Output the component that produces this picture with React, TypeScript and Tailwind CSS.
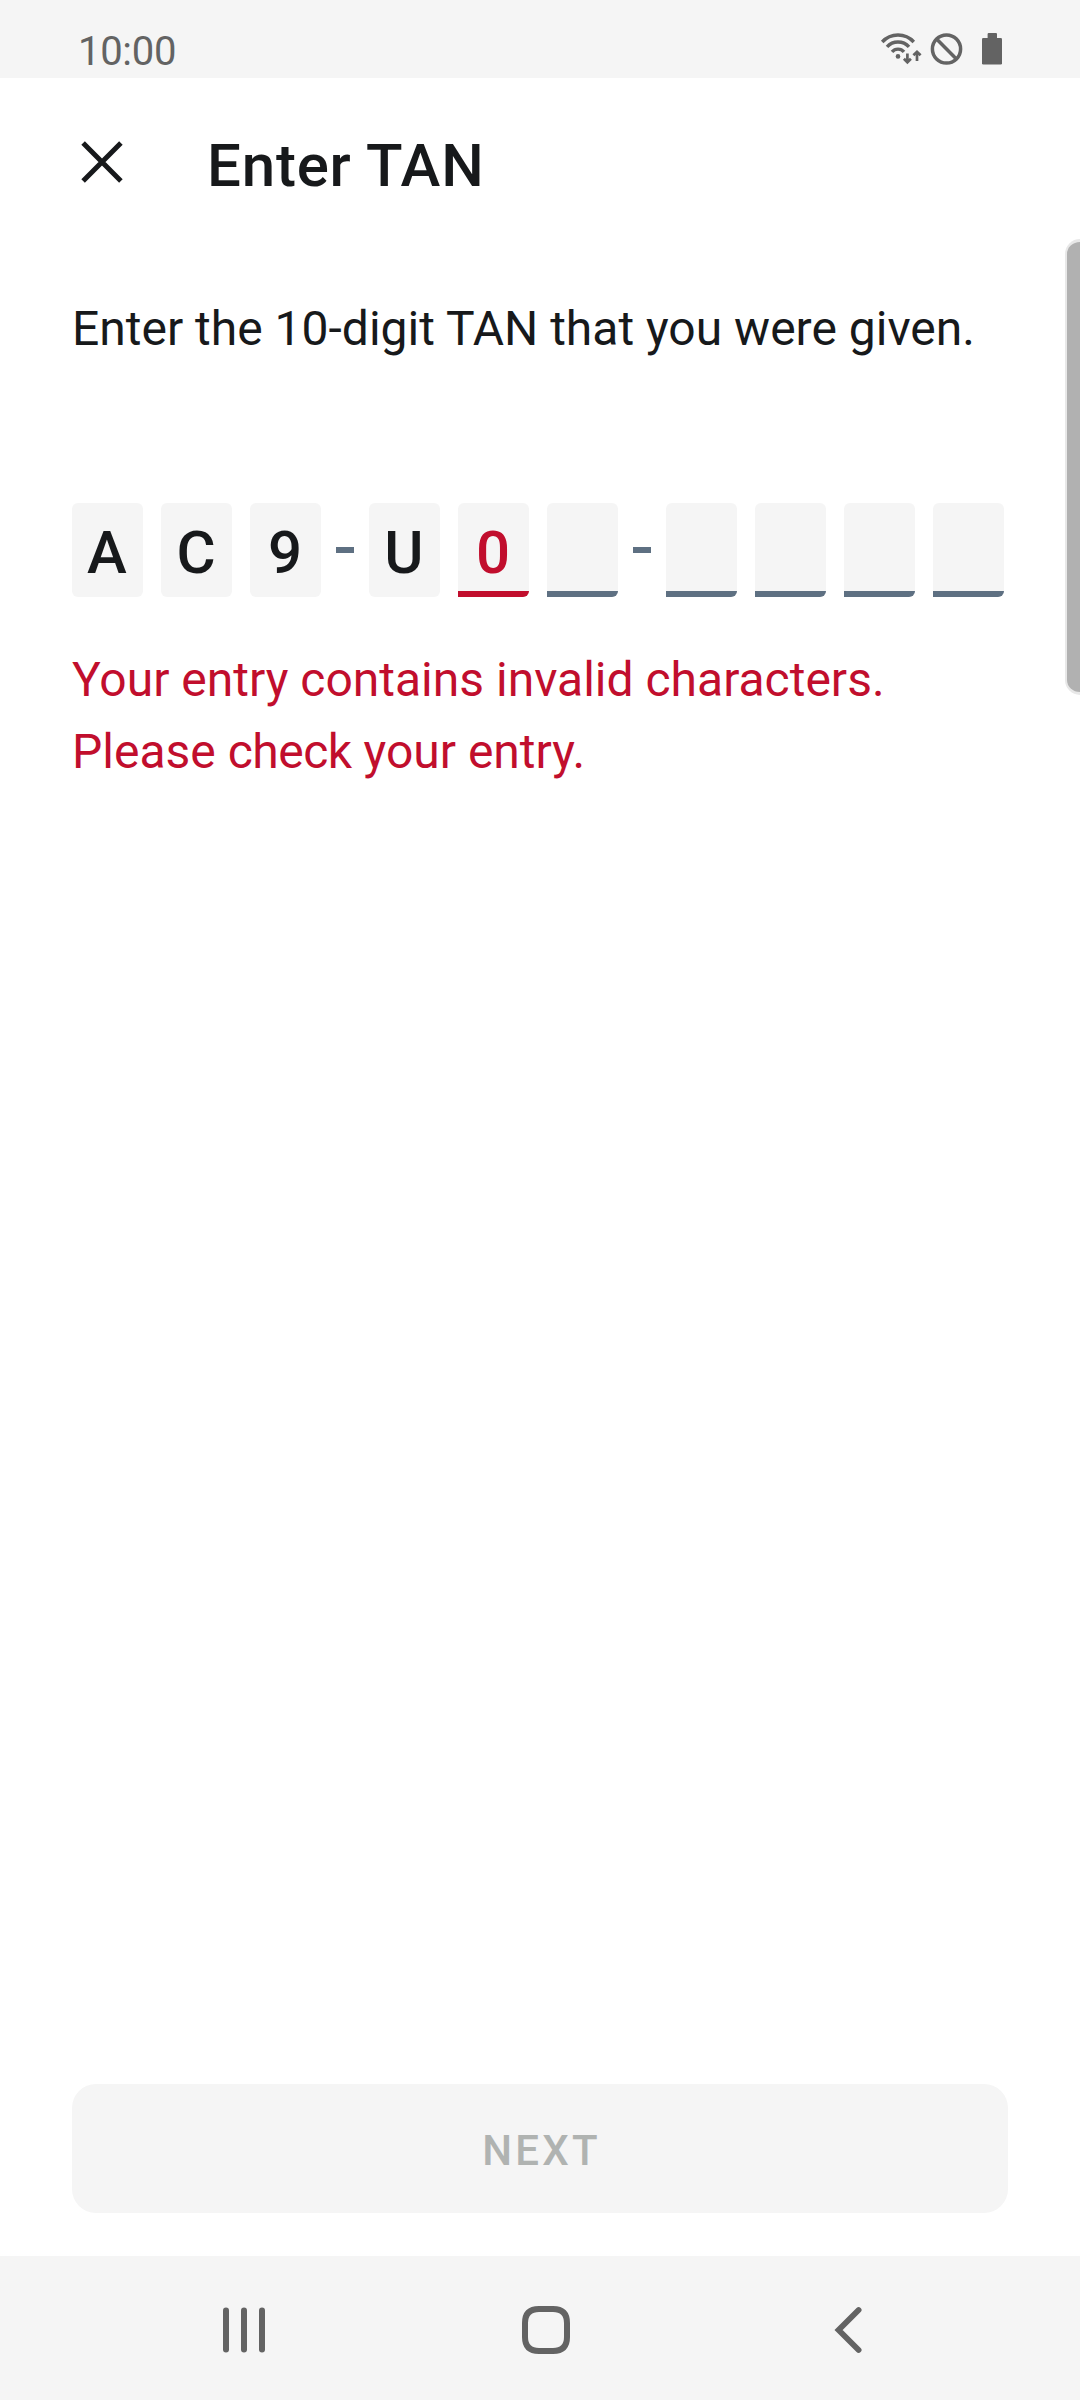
type CellState = 'filled' | 'invalid' | 'empty';
type CellData = { char: string; state: CellState };

const groups: CellData[][] = [
  [
    { char: 'A', state: 'filled' },
    { char: 'C', state: 'filled' },
    { char: '9', state: 'filled' },
  ],
  [
    { char: 'U', state: 'filled' },
    { char: '0', state: 'invalid' },
    { char: '', state: 'empty' },
  ],
  [
    { char: '', state: 'empty' },
    { char: '', state: 'empty' },
    { char: '', state: 'empty' },
    { char: '', state: 'empty' },
  ],
];

const cellStyles: Record<CellState, string> = {
  filled: 'rounded-[6px] text-[#17191b]',
  invalid: 'rounded-[6px] rounded-bl-none text-[#c10e2d]',
  empty: 'rounded-[6px] rounded-bl-none',
};

const underlineStyles: Record<CellState, string> = {
  filled: 'bg-transparent',
  invalid: 'bg-[#c10e2d]',
  empty: 'bg-[#5e7082]',
};

function Cell({ char, state }: CellData) {
  return (
    <div className={`flex h-[94px] w-[71px] flex-col overflow-hidden bg-[#f5f5f5] ${cellStyles[state]}`}>
      <span className="h-[88px] pr-px text-center text-[60px] font-medium leading-[99px]">{char}</span>
      <span className={`h-[6px] ${underlineStyles[state]}`} />
    </div>
  );
}

function StatusBar() {
  return (
    <div className="flex h-[78px] items-start justify-between bg-[#f5f5f5] pl-[78px] pr-[78px] text-[#636363]">
      <span className="mt-[32px] text-[40px] leading-[40px] tracking-[-0.3px]">10:00</span>
      <svg className="mt-[30px]" width="122" height="38" viewBox="880 30 122 38" fill="none" stroke="currentColor">
        <g strokeWidth="3.4">
          <path d="M882.2 42A21.3 21.3 0 0 1 913.8 42" />
          <path d="M887 46.9A14.8 14.8 0 0 1 909 46.9" />
          <path d="M892 51.9A7.9 7.9 0 0 1 904 51.9" />
        </g>
        <circle cx="898" cy="56.4" r="2.3" fill="currentColor" stroke="none" />
        <g strokeWidth="2.7">
          <path d="M907.4 53.5V62M903.9 58.8L907.4 62.3L910.9 58.8" />
          <path d="M917 61V52M913.4 55.3L917 51.8L920.6 55.3" />
        </g>
        <circle cx="946.5" cy="49" r="14.1" strokeWidth="3.5" />
        <path d="M936.6 39.1L956.4 58.9" strokeWidth="3.5" />
        <g fill="currentColor" stroke="none">
          <rect x="987.6" y="33" width="9.4" height="7" rx="1" />
          <rect x="982" y="38" width="20" height="26.6" rx="1.3" />
        </g>
      </svg>
    </div>
  );
}

function NavBar() {
  return (
    <nav className="mt-[43px] flex h-[144px] items-center justify-between bg-[#f5f5f5] pl-[222px] pr-[217px] text-[#636363]">
      <button className="mt-1" aria-label="Recents">
        <svg width="44" height="48" viewBox="222 2306 44 48" fill="currentColor">
          <rect x="223" y="2307.5" width="6" height="45" rx="3" />
          <rect x="241" y="2307.5" width="6" height="45" rx="3" />
          <rect x="259" y="2307.5" width="6" height="45" rx="3" />
        </svg>
      </button>
      <button className="mr-2 mt-1" aria-label="Home">
        <svg width="48" height="48" viewBox="522 2306 48 48" fill="none" stroke="currentColor" strokeWidth="6">
          <path d="M539 2309H553Q567 2309 567 2323V2337Q567 2351 553 2351H539Q525 2351 525 2337V2323Q525 2309 539 2309Z" />
        </svg>
      </button>
      <button className="mt-1" aria-label="Back">
        <svg width="29" height="48" viewBox="834 2306 29 48" fill="none" stroke="currentColor" strokeWidth="5.8" strokeLinecap="round" strokeLinejoin="miter">
          <path d="M858.6 2310L838.6 2330L858.6 2350" />
        </svg>
      </button>
    </nav>
  );
}

export default function App() {
  return (
    <div className="relative flex h-[2400px] w-[1080px] flex-col overflow-hidden bg-white font-[Roboto,sans-serif] text-[#17191b]">
      <StatusBar />
      <header className="flex h-[168px] items-center">
        <button className="ml-20" aria-label="Close">
          <svg width="44" height="44" viewBox="0 0 44 44" stroke="currentColor" strokeWidth="5">
            <path d="M3.1 3.1L40.9 40.9M40.9 3.1L3.1 40.9" />
          </svg>
        </button>
        <h1 className="ml-[83px] mt-[7px] text-[60px] font-medium leading-[70px] tracking-[0.8px]">Enter TAN</h1>
      </header>

      <main className="flex grow flex-col px-[72px] pt-[47px] text-[48px] leading-[72px]">
        <p className="whitespace-nowrap">Enter the 10-digit TAN that you were given.</p>
        <div className="mt-[138px] flex items-center gap-[15px]">
          {groups.map((group, g) => (
            <div key={g} className="flex items-center gap-[15px]">
              {g > 0 && <span className="h-[6px] w-[18px] bg-[#5e7082]" />}
              <div className="flex gap-[18px]">
                {group.map((cell, i) => (
                  <Cell key={i} {...cell} />
                ))}
              </div>
            </div>
          ))}
        </div>
        <p className="mt-[47px] whitespace-nowrap text-[#c10e2d]">
          Your entry contains invalid characters.
          <br />
          Please <span className="tracking-[-0.5px]">check</span> your entry.
        </p>
        <button className="mt-auto h-[129px] rounded-[24px] bg-[#f5f5f5] pl-[3px] pt-1 text-[42px] font-medium leading-[48px] tracking-[3.2px] text-[#b0b3b1]">
          NEXT
        </button>
      </main>

      <NavBar />
      <div className="absolute right-0 top-[239px] h-[456px] w-[15px] rounded-l-[15px] border-y-[3px] border-l-2 border-[#e8e8e8] bg-[#b1b1b1]" />
    </div>
  );
}
